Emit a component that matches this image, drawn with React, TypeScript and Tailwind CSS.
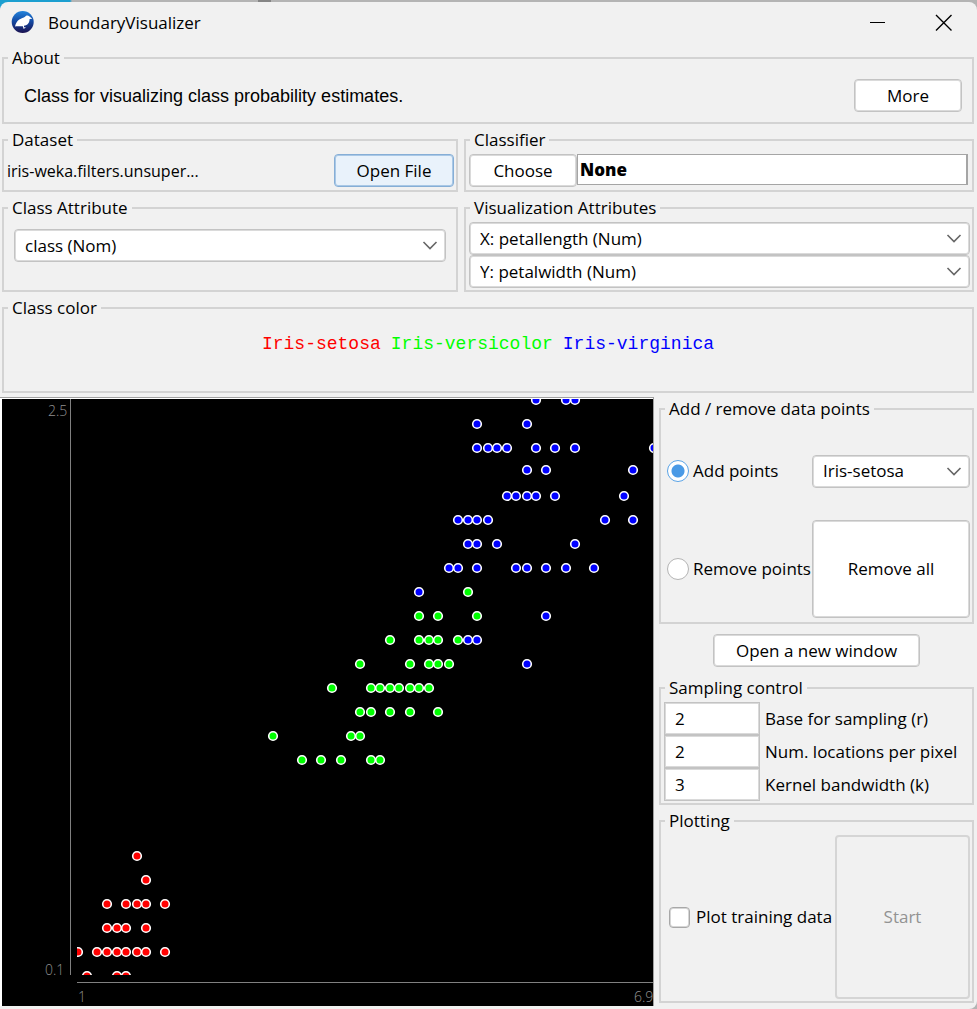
import { useState } from "react";
import type { ReactNode } from "react";

type Series = { fill: string; rows: [number, number[]][] };

const SERIES: Series[] = [
  {
    fill: "#ff0000",
    rows: [
      [457, [135]],
      [481, [144]],
      [505, [105, 124, 135, 144, 163]],
      [529, [105, 115, 124, 144]],
      [553, [76, 95, 105, 115, 124, 135, 144, 163]],
      [577, [85, 115, 124]],
    ],
  },
  {
    fill: "#00ff00",
    rows: [
      [193, [466]],
      [217, [417, 436, 475]],
      [241, [388, 417, 427, 436, 456]],
      [265, [358, 408, 427, 436, 447]],
      [289, [330, 369, 378, 388, 397, 408, 417, 427]],
      [313, [358, 369, 388, 408, 436]],
      [337, [271, 349, 358]],
      [361, [300, 319, 339, 369, 378]],
    ],
  },
  {
    fill: "#0000ff",
    rows: [
      [1, [534, 564, 573]],
      [25, [475, 525]],
      [49, [475, 486, 495, 505, 534, 553, 573, 652]],
      [71, [525, 544, 631]],
      [97, [505, 514, 525, 534, 553, 622]],
      [121, [456, 466, 475, 486, 603, 631]],
      [145, [466, 475, 495, 573]],
      [169, [447, 456, 475, 514, 525, 544, 564, 592]],
      [193, [417]],
      [217, [544]],
      [241, [466, 475]],
      [265, [525]],
    ],
  },
];

const EDGE = "border border-[#c3c3c3] shadow-[inset_0_0_0_1px_#dadada]";
const BUTTON = `h-[33px] rounded ${EDGE} bg-white text-center leading-none`;

function Group({
  title,
  className = "",
  children,
}: {
  title: string;
  className?: string;
  children: ReactNode;
}) {
  return (
    <fieldset className={`min-w-0 border-2 border-[#d3d3d3] ${className}`}>
      <legend className="ml-1 h-[22px] px-1 leading-[22px]">{title}</legend>
      {children}
    </fieldset>
  );
}

function Combo({ label, options }: { label: string; options: string[] }) {
  return (
    <div className="relative w-full">
      <select
        aria-label={label}
        className={`block h-[33px] w-full appearance-none rounded ${EDGE} bg-white pr-8 pl-[10px]`}
      >
        {options.map((o) => (
          <option key={o}>{o}</option>
        ))}
      </select>
      <svg
        className="pointer-events-none absolute top-3 right-2 h-[9px] w-4"
        viewBox="0 0 16 9"
        fill="none"
        stroke="#666"
        strokeWidth="1.6"
      >
        <path d="M1.5 1 8 7.5 14.5 1" />
      </svg>
    </div>
  );
}

function WekaLogo() {
  return (
    <svg className="size-6" viewBox="0 0 24 24">
      <defs>
        <linearGradient id="ball" x1="0" y1="0" x2="0" y2="1">
          <stop offset="0" stopColor="#2384dc" />
          <stop offset="0.45" stopColor="#144ba5" />
          <stop offset="1" stopColor="#1b1250" />
        </linearGradient>
      </defs>
      <circle cx="11.700" cy="12" r="11" fill="url(#ball)" />
      <path
        d="M4 16.500 C4.700 13.500 6 11 8.300 9.500 C10.500 8.200 12.500 8 14 6.800 C15 5.400 17 5 18.200 6.300 L21.300 8.800 L18.600 8.900 C18.600 11.500 17.500 14 15 15.200 L13 15.800 L13 17.300 L15 17.200 L12.700 19 L11.800 16.200 C9 16.600 6.500 15.800 4 16.500Z"
        fill="#fff"
      />
    </svg>
  );
}

function Plot() {
  return (
    <svg
      className="block"
      width="651"
      height="607"
      viewBox="0 0 651 607"
      fontFamily='"Open Sans", sans-serif'
      fontSize="14"
      fontWeight="300"
    >
      <defs>
        <clipPath id="data-area">
          <rect x="75" y="0" width="576" height="576" />
        </clipPath>
      </defs>
      <path d="M68.500 0V576M75 583.500H651" stroke="#808080" />
      <g fill="#909090">
        <text x="46" y="17">2.5</text>
        <text x="43" y="576">0.1</text>
        <text x="76" y="603">1</text>
        <text x="632" y="603">6.9</text>
      </g>
      <g clipPath="url(#data-area)" stroke="#fff" strokeWidth="1.600">
        {SERIES.map((s) =>
          s.rows.map(([y, xs]) =>
            xs.map((x) => (
              <circle key={`${x}-${y}`} cx={x} cy={y} r="4.300" fill={s.fill} />
            )),
          ),
        )}
      </g>
    </svg>
  );
}

function NumberRow({ id, label, value }: { id: string; label: string; value: string }) {
  return (
    <div className="flex h-[33px] items-center gap-[5px]">
      <input
        id={id}
        defaultValue={value}
        className={`h-[33px] w-24 ${EDGE} bg-white px-[10px]`}
      />
      <label htmlFor={id} className="whitespace-nowrap">
        {label}
      </label>
    </div>
  );
}

export default function App() {
  const [mode, setMode] = useState("add");

  return (
    <div className="flex min-h-screen flex-col bg-[#b4b4b4] bg-[linear-gradient(90deg,#1c9fd0_70px,#b4b4b4_72px,#b4b4b4_258px,#858585_258px,#858585_271px,#b4b4b4_271px)] bg-[length:100%_8px] bg-no-repeat pt-[2px] font-['Open_Sans','Noto_Sans',sans-serif] text-[17px] leading-[22px] text-black">
      <div className="flex flex-1 flex-col rounded-t-lg rounded-br-lg bg-[#f1f1f1]">
        <header className="flex h-[45px] items-start justify-between pt-2 pr-6 pl-[11px]">
          <div className="flex items-end gap-[13px]">
            <WekaLogo />
            <h1>BoundaryVisualizer</h1>
          </div>
          <div className="flex items-center gap-12 pt-1">
            <button aria-label="Minimize" className="block">
              <svg className="block h-[18px] w-[18px]" viewBox="0 0 18 18" stroke="#000">
                <path d="M1 8.500H16" />
              </svg>
            </button>
            <button aria-label="Close" className="block">
              <svg
                className="block h-[18px] w-[18px]"
                viewBox="0 0 18 18"
                stroke="#000"
                strokeWidth="1.4"
              >
                <path d="M1 1 16.500 16.500M16.500 1 1 16.500" />
              </svg>
            </button>
          </div>
        </header>

        <main className="flex flex-1 flex-col gap-[5px] pr-[3px] pl-[2px]">
          <Group title="About" className="h-[77px]">
            <div className="flex items-center justify-between pt-[10px] pr-[10px] pl-5">
              <p className="font-['Liberation_Sans',sans-serif] text-[18px]">
                Class for visualizing class probability estimates.
              </p>
              <button className={`${BUTTON} w-[108px]`}>More</button>
            </div>
          </Group>

          <div className="grid grid-cols-[456fr_510fr] gap-x-[6px] gap-y-[5px]">
            <Group title="Dataset" className="h-[63px]">
              <div className="flex items-center justify-between pt-[3px] pr-[2px] pl-[3px]">
                <span className="text-[16px]">iris-weka.filters.unsuper...</span>
                <button className="h-[33px] w-[120px] rounded border border-[#86aed6] bg-[#e9f2fb] leading-none shadow-[inset_0_0_0_1px_#a9c8e6]">
                  Open File
                </button>
              </div>
            </Group>
            <Group title="Classifier" className="h-[63px]">
              <div className="flex items-start pt-[3px] pr-1 pl-[3px]">
                <button className={`${BUTTON} w-[108px]`}>Choose</button>
                <input
                  aria-label="Classifier"
                  readOnly
                  value="None"
                  className="h-[31px] min-w-0 flex-1 border border-r-2 border-[#a5a5a5] bg-white px-[2px] font-extrabold"
                />
              </div>
            </Group>
            <Group title="Class Attribute" className="h-[95px]">
              <div className="px-[10px] pt-[10px]">
                <Combo label="Class attribute" options={["class (Nom)"]} />
              </div>
            </Group>
            <Group title="Visualization Attributes" className="h-[95px]">
              <div className="pt-[3px] pr-[2px] pl-[3px]">
                <Combo label="X attribute" options={["X: petallength (Num)"]} />
                <Combo label="Y attribute" options={["Y: petalwidth (Num)"]} />
              </div>
            </Group>
          </div>

          <Group title="Class color" className="h-24">
            <div className="flex justify-center gap-[10px] pt-[14px] font-['Liberation_Mono',monospace] text-[18px]">
              <span className="text-[#ff0000]">Iris-setosa</span>
              <span className="text-[#00ff00]">Iris-versicolor</span>
              <span className="text-[#0000ff]">Iris-virginica</span>
            </div>
          </Group>

          <div className="-mt-px flex flex-1 justify-between gap-[5px] pb-[3px]">
            <div className="-ml-[2px] min-w-0 flex-1 overflow-hidden border-t border-r border-[#a0a0a0] bg-white pt-px pl-[2px]">
              <div className="h-full overflow-hidden bg-black">
                <Plot />
              </div>
            </div>

            <div className="flex w-[315px] shrink-0 flex-col pt-px">
              <Group title="Add / remove data points">
                <div className="flex h-[100px] items-center justify-between pt-[2px] pr-[2px] pl-[6px]">
                  <label className="flex items-center gap-[4px] whitespace-nowrap">
                    <input
                      type="radio"
                      name="mode"
                      checked={mode === "add"}
                      onChange={() => setMode("add")}
                      className="size-[22px] appearance-none rounded-full border border-[#b4b4b4] bg-white checked:border-[#5aa3e6] checked:bg-[radial-gradient(circle,#4a9ae6_6px,#fff_7px)]"
                    />
                    Add points
                  </label>
                  <div className="w-[158px]">
                    <Combo
                      label="Class of added points"
                      options={["Iris-setosa", "Iris-versicolor", "Iris-virginica"]}
                    />
                  </div>
                </div>
                <div className="flex h-[98px] items-center justify-between pr-[2px] pl-[6px]">
                  <label className="flex items-center gap-[4px] whitespace-nowrap">
                    <input
                      type="radio"
                      name="mode"
                      checked={mode === "remove"}
                      onChange={() => setMode("remove")}
                      className="size-[22px] appearance-none rounded-full border border-[#b4b4b4] bg-white checked:border-[#5aa3e6] checked:bg-[radial-gradient(circle,#4a9ae6_6px,#fff_7px)]"
                    />
                    Remove points
                  </label>
                  <button className={`h-full w-[158px] shrink-0 rounded ${EDGE} bg-white`}>
                    Remove all
                  </button>
                </div>
                <div className="h-1" />
              </Group>

              <button className={`${BUTTON} my-[10px] w-[207px] self-center`}>
                Open a new window
              </button>

              <Group title="Sampling control" className="h-32">
                <div className="pt-[3px] pl-[3px]">
                  <NumberRow id="base" label="Base for sampling (r)" value="2" />
                  <NumberRow id="locations" label="Num. locations per pixel" value="2" />
                  <NumberRow id="kernel" label="Kernel bandwidth (k)" value="3" />
                </div>
              </Group>

              <Group title="Plotting" className="mt-[5px] h-[193px]">
                <div className="flex items-center justify-between pt-[3px] pr-[2px] pl-2">
                  <label className="flex items-center gap-[6px] whitespace-nowrap">
                    <input
                      type="checkbox"
                      className="size-[21px] appearance-none rounded border border-[#a8a8a8] bg-white shadow-[inset_0_0_0_1px_#d6d6d6] checked:bg-[#4a9ae6]"
                    />
                    Plot training data
                  </label>
                  <button
                    disabled
                    className="h-[164px] w-[135px] rounded border-2 border-[#d5d5d5] text-[#939393]"
                  >
                    Start
                  </button>
                </div>
              </Group>
            </div>
          </div>
        </main>
      </div>
    </div>
  );
}
